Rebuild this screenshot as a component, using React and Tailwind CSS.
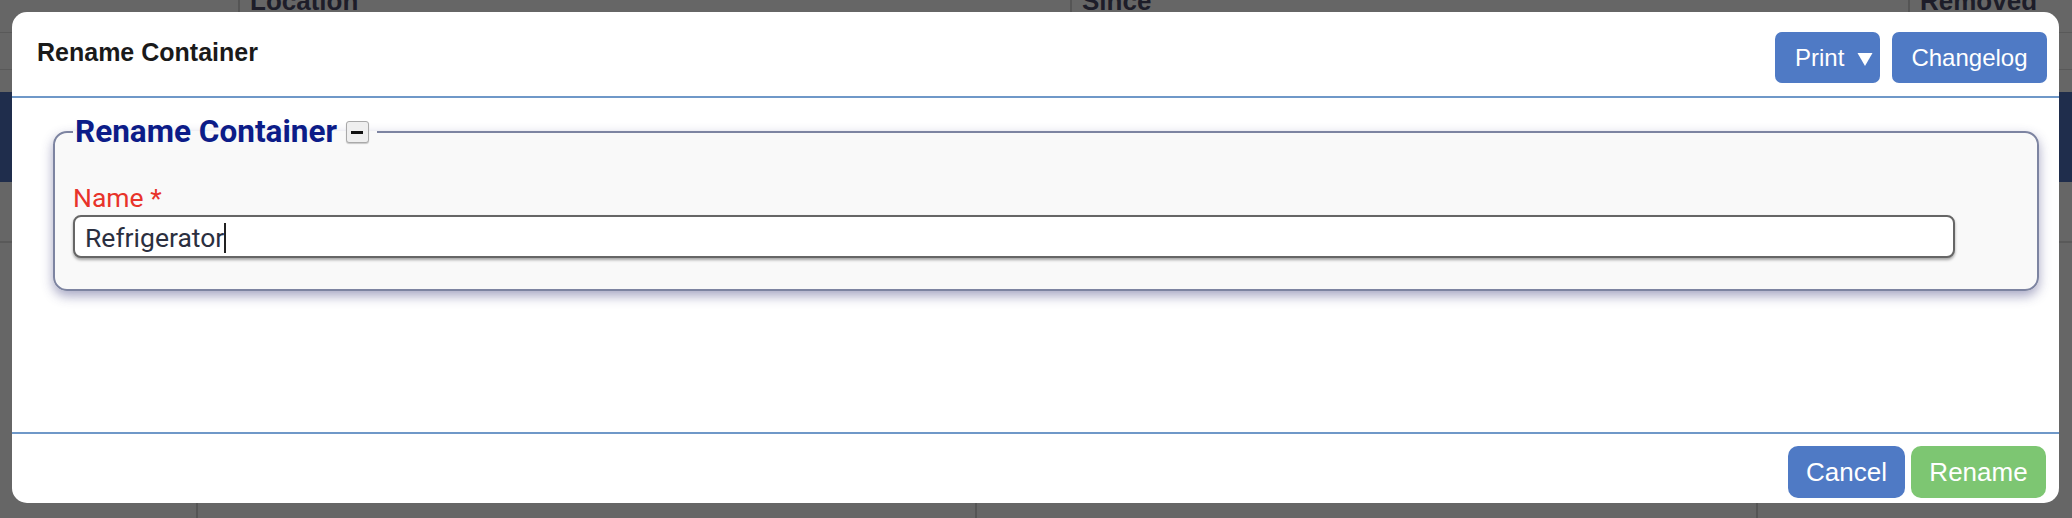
import React from "react";

const arial = { fontFamily: '"Liberation Sans", Arial, sans-serif' };
const roboto = { fontFamily: 'Roboto, "Liberation Sans", sans-serif' };

const Backdrop = () => {
  return (
    <div className="flex flex-col h-full bg-[#666666]" style={arial}>
      <div className="flex h-[33px] border-b border-[#595959] overflow-hidden">
        <div className="w-[238px]" />
        <div className="w-[832px] border-l-2 border-[#555555] pl-[10px]">
          <div className="-mt-[14px] text-[26px] leading-[30px] font-bold text-[#1d1d29]">Location</div>
        </div>
        <div className="w-[838px] border-l-2 border-[#555555] pl-[10px]">
          <div className="-mt-[14px] text-[26px] leading-[30px] font-bold text-[#1d1d29]">Since</div>
        </div>
        <div className="flex-1 border-l-2 border-[#555555] pl-[10px]">
          <div className="-mt-[14px] text-[26px] leading-[30px] font-bold text-[#1d1d29]">Removed</div>
        </div>
      </div>
      <div className="h-[37px] border-b border-[#595959]" />
      <div className="h-[22px]" />
      <div className="h-[90px] bg-[#1f2d4c]" />
      <div className="h-[61px] border-b-2 border-[#595959]" />
      <div className="flex-1" />
      <div className="flex h-[22px]">
        <div className="w-[196px]" />
        <div className="w-[779px] border-l-2 border-[#555555]" />
        <div className="w-[781px] border-l-2 border-[#555555]" />
        <div className="flex-1 border-l-2 border-[#555555]" />
      </div>
    </div>
  );
};

const PrintArrow = () => (
  <svg width="16" height="15" viewBox="0 0 16 15" className="mt-[4px]">
    <polygon points="0.5,1 15.5,1 8,14" fill="#ffffff" />
  </svg>
);

const RenameDialog = () => {
  return (
    <div className="absolute left-[12px] top-[12px] w-[2047px] h-[491px] bg-white rounded-[15px] flex flex-col overflow-hidden">
      {/* header */}
      <div className="h-[86px] border-b-2 border-[#6f98c8] flex justify-between shrink-0">
        <h2
          className="pl-[25px] pt-[25px] text-[25px] leading-[30px] font-bold text-[#1a1a1a]"
          style={arial}
        >
          Rename Container
        </h2>
        <div className="flex gap-[12px] pt-[20px] pr-[12px]" style={arial}>
          <button className="h-[51px] w-[105px] bg-[#4f7ac5] rounded-[7px] text-white text-[24px] flex items-center pl-[20px] gap-[13px]">
            <span>Print</span>
            <PrintArrow />
          </button>
          <button className="h-[51px] w-[155px] bg-[#4f7ac5] rounded-[7px] text-white text-[24px] flex items-center justify-center">
            Changelog
          </button>
        </div>
      </div>

      {/* body */}
      <div className="flex-1 pt-[16px] pl-[41px]">
        <fieldset className="w-[1986px] border-2 border-[#7d84a1] rounded-[14px] bg-[#f9f9f9] pl-[18px] pb-[31px] shadow-[0_5px_12px_rgba(60,60,125,0.45)]">
          <legend className="flex items-center px-[2px] pr-[8px]">
            <span
              className="text-[31.5px] leading-[36px] font-bold text-[#0c1c88]"
              style={roboto}
            >
              Rename Container
            </span>
            <span className="ml-[9px] w-[23px] h-[22px] rounded-[3px] border border-[#a9a9a9] bg-[#efefef] shadow-[0_1px_1px_rgba(0,0,0,0.2)] flex items-center justify-center">
              <span className="block w-[12px] h-[3px] bg-[#111111]" />
            </span>
          </legend>
          <div
            className="mt-[33px] text-[26.5px] leading-[30px] text-[#e8332a]"
            style={roboto}
          >
            Name *
          </div>
          <div
            className="mt-[2px] w-[1882px] h-[43px] border-2 border-[#666666] rounded-[8px] bg-white shadow-[0_2px_3px_rgba(0,0,0,0.35)] flex items-center pl-[10px]"
            style={roboto}
          >
            <span className="text-[26.5px] leading-[30px] text-[#2b2f40] pt-[3px]">Refrigerator</span>
            <span className="block w-[2px] h-[30px] bg-[#222222] mt-[2px]" />
          </div>
        </fieldset>
      </div>

      {/* footer */}
      <div className="h-[71px] border-t-2 border-[#6f98c8] flex justify-end gap-[6px] pt-[12px] pr-[13px] shrink-0" style={arial}>
        <button className="h-[52px] w-[117px] bg-[#4f7ac5] rounded-[10px] text-white text-[26px] flex items-center justify-center">
          Cancel
        </button>
        <button className="h-[52px] w-[135px] bg-[#7dc672] rounded-[10px] text-white text-[26px] flex items-center justify-center">
          Rename
        </button>
      </div>
    </div>
  );
};

export default function App() {
  return (
    <div className="relative w-[2072px] h-[518px] overflow-hidden">
      <Backdrop />
      <RenameDialog />
    </div>
  );
}
